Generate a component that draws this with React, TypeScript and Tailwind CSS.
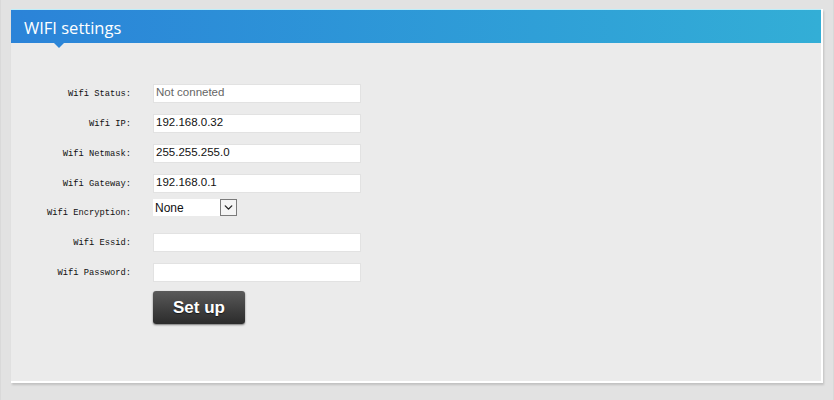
import { ChevronDown } from "lucide-react";

const rows = [
  { label: "Wifi Status:", value: "Not conneted", muted: true },
  { label: "Wifi IP:", value: "192.168.0.32" },
  { label: "Wifi Netmask:", value: "255.255.255.0" },
  { label: "Wifi Gateway:", value: "192.168.0.1" },
];

const rowsAfter = [
  { label: "Wifi Essid:", value: "" },
  { label: "Wifi Password:", value: "" },
];

function Label({ children }: { children: string }) {
  return (
    <div className="w-[120px] shrink-0 pt-[3px] text-right font-['Liberation_Mono',monospace] text-[8.75px] text-[#111]">
      {children}
    </div>
  );
}

function Field({ value, muted }: { value: string; muted?: boolean }) {
  return (
    <div
      className={`ml-[22px] flex h-[19px] w-[208px] items-center border border-[#e2e2e2] bg-white pl-[2px] font-['Liberation_Sans',Arial,sans-serif] text-[11.5px] ${
        muted ? "text-[#666]" : "text-[#111]"
      }`}
    >
      {value}
    </div>
  );
}

export default function App() {
  return (
    <div className="h-[400px] w-[834px] border-x border-[#d9d9d9] bg-[#e2e2e2] pl-[10px] pt-[9px]">
      <div className="h-[374px] w-[812px] border-b-2 border-r-2 border-white bg-[#ebebeb] shadow-[1px_2px_2px_rgba(0,0,0,0.15)]">
        {/* Header */}
        <div className="relative h-[34px] border-t border-[#bdeefa] bg-gradient-to-r from-[#2b83d8] to-[#33aed6] pl-[13px] pt-[6px] font-['Open_Sans','Noto_Sans',sans-serif] text-[16.5px] text-white">
          WIFI settings
          <div className="absolute left-[43px] top-full h-0 w-0 border-x-[5px] border-t-[5px] border-x-transparent border-t-[#2b85d8]" />
        </div>

        {/* Form */}
        <div className="flex flex-col pt-[35px]">
          {rows.map((r) => (
            <div key={r.label} className="flex h-[30px] items-center">
              <Label>{r.label}</Label>
              <Field value={r.value} muted={r.muted} />
            </div>
          ))}

          <div className="flex h-[29px] items-center">
            <Label>Wifi Encryption:</Label>
            <div className="mb-[10px] ml-[22px] flex h-[17px] w-[84px] items-center bg-white font-['Liberation_Sans',Arial,sans-serif] text-[12px] text-[#111]">
              <span className="flex-1 pl-[2px]">None</span>
              <span className="flex h-[17px] w-[17px] items-center justify-center border border-[#7a7a7a] bg-[#f4f4f4]">
                <ChevronDown size={13} strokeWidth={2.5} className="text-[#222]" />
              </span>
            </div>
          </div>

          {rowsAfter.map((r) => (
            <div key={r.label} className="flex h-[30px] items-center">
              <Label>{r.label}</Label>
              <Field value={r.value} />
            </div>
          ))}

          <div className="ml-[142px] mt-[4px]">
            <button className="h-[33px] w-[92px] rounded-[3px] bg-gradient-to-b from-[#5a5a5a] to-[#2b2b2b] font-['Liberation_Sans',Arial,sans-serif] text-[17px] font-bold text-white shadow-[0_1px_2px_rgba(0,0,0,0.5)] [text-shadow:0_1px_1px_rgba(0,0,0,0.6)]">
              Set up
            </button>
          </div>
        </div>
      </div>
    </div>
  );
}
